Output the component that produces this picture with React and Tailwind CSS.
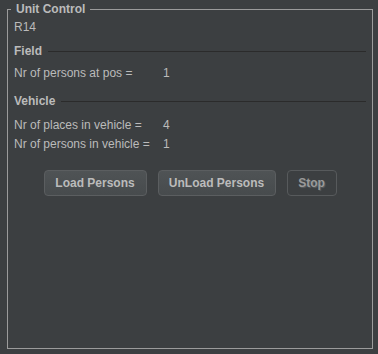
export default function App() {
  const font = { fontFamily: '"Liberation Sans", Arial, sans-serif' };
  return (
    <div
      className="w-[378px] h-[354px] bg-[#3c3f41] text-[#bbbbbb] text-[12px] leading-[15px] pt-[2px] pl-[7px]"
      style={font}
    >
      <fieldset className="w-[366px] h-[347px] border border-[#9b9b9b] px-[6px] pb-[6px]">
        <legend className="-ml-[3px] px-[5px] font-bold leading-[14px]">Unit Control</legend>
        <div className="mt-[4px]">R14</div>

        <div className="mt-[9px] flex items-center gap-[6px]">
          <span className="font-bold">Field</span>
          <div className="flex-1 h-px bg-[#2b2b2b]" />
        </div>
        <div className="mt-[7px] flex">
          <span className="w-[149px]">Nr of persons at pos =</span>
          <span>1</span>
        </div>

        <div className="mt-[13px] flex items-center gap-[6px]">
          <span className="font-bold">Vehicle</span>
          <div className="flex-1 h-px bg-[#2b2b2b]" />
        </div>
        <div className="mt-[9px] flex">
          <span className="w-[149px]">Nr of places in vehicle =</span>
          <span>4</span>
        </div>
        <div className="mt-[4px] flex">
          <span className="w-[149px]">Nr of persons in vehicle =</span>
          <span>1</span>
        </div>

        <div className="mt-[18px] flex justify-center gap-[11px]">
          <button className="w-[103px] h-[26px] rounded-[4px] border border-[#5b5e60] bg-gradient-to-b from-[#4f5355] to-[#474b4d] font-bold text-[#bbbbbb]">
            Load Persons
          </button>
          <button className="w-[118px] h-[26px] rounded-[4px] border border-[#5b5e60] bg-gradient-to-b from-[#4f5355] to-[#474b4d] font-bold text-[#bbbbbb]">
            UnLoad Persons
          </button>
          <button className="w-[50px] h-[26px] rounded-[4px] border border-[#575a5c] bg-[#3c3f41] font-bold text-[#9a9a9a] [text-shadow:1px_1px_1px_#5a5e60]">
            Stop
          </button>
        </div>
      </fieldset>
    </div>
  );
}
